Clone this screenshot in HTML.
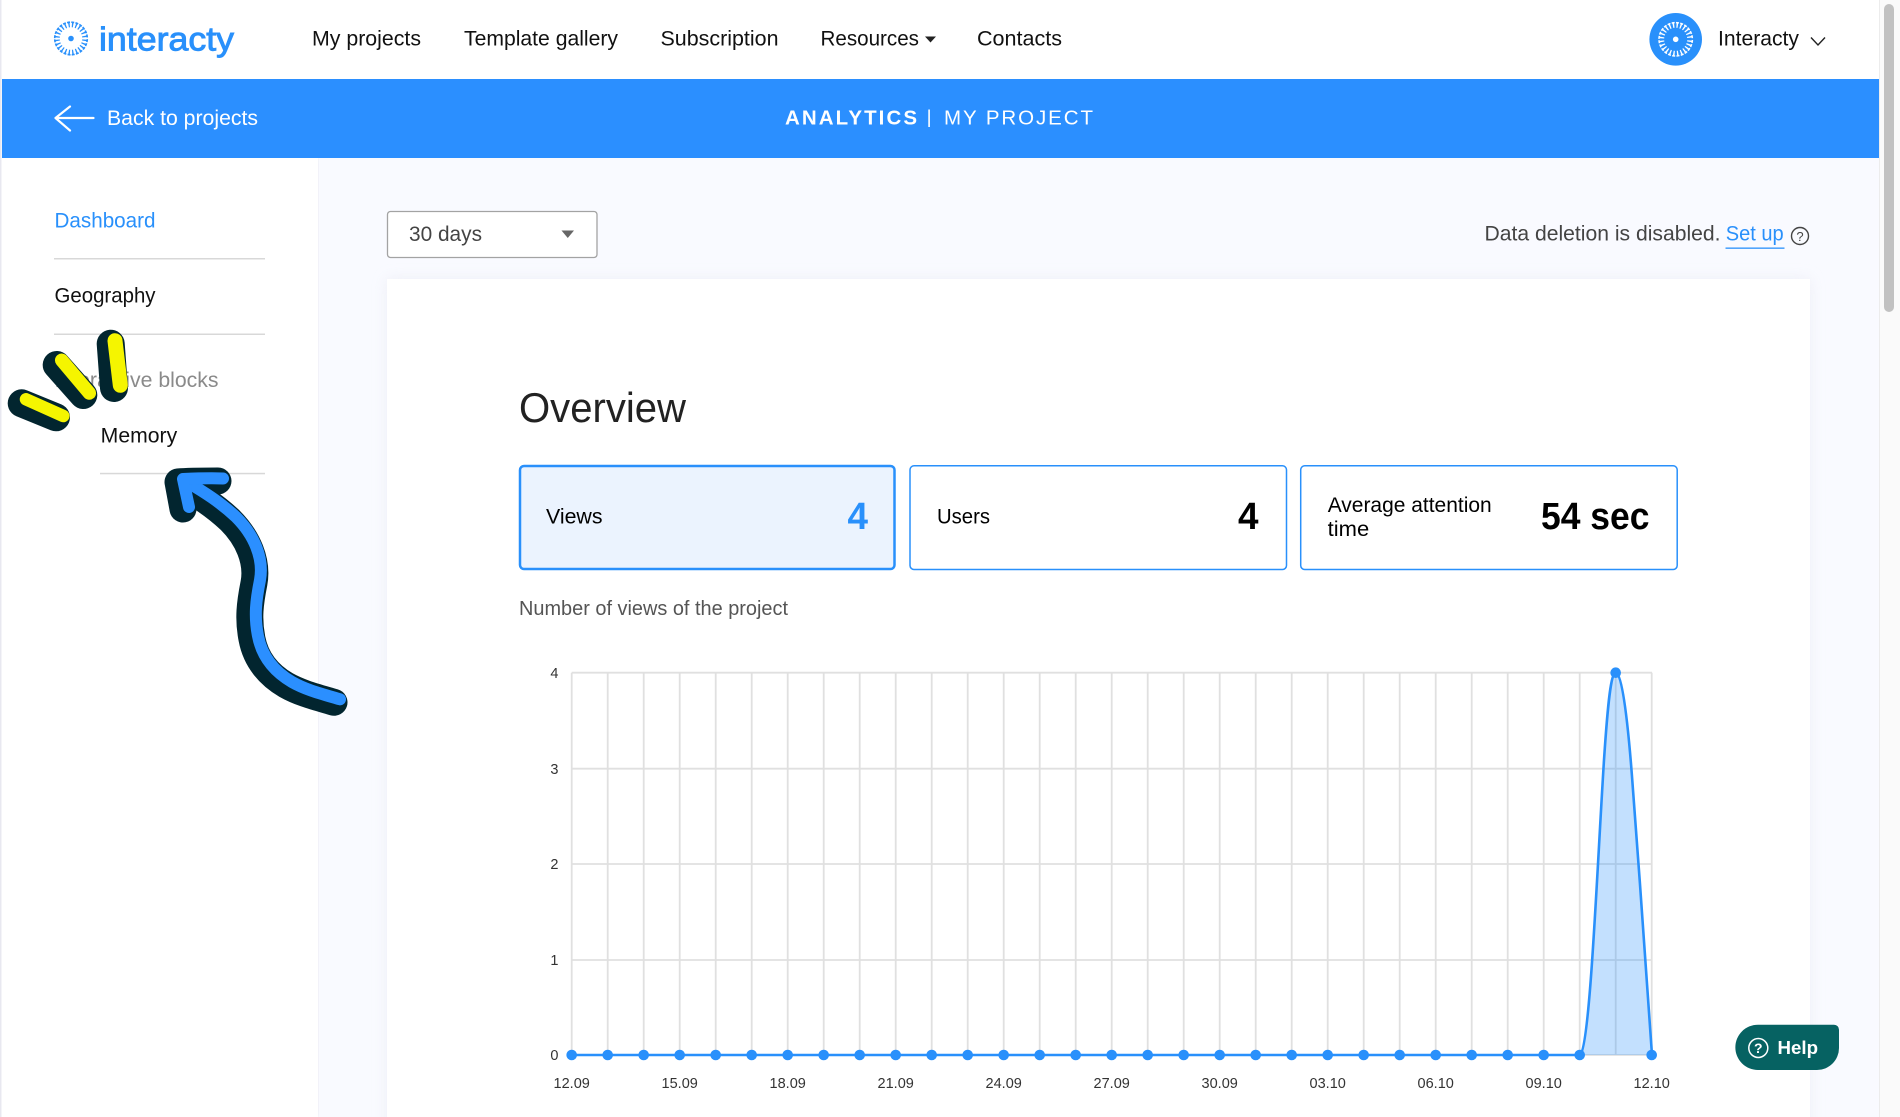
<!DOCTYPE html>
<html lang="en">
<head>
<meta charset="utf-8">
<title>Interacty Analytics</title>
<style>
html,body{margin:0;padding:0;width:1900px;height:1117px;overflow:hidden;background:#fff}
svg{display:block;position:absolute;left:0;top:0}
text{font-family:"Liberation Sans",Arial,sans-serif}
.n{font-size:21px;fill:#111}
</style>
</head>
<body>
<svg width="1900" height="1117" viewBox="0 0 1900 1117" xmlns="http://www.w3.org/2000/svg">
<defs>
<filter id="sh" x="-5%" y="-5%" width="110%" height="110%"><feGaussianBlur stdDeviation="7"/></filter>
<filter id="sh2" x="-20%" y="-5%" width="140%" height="110%"><feGaussianBlur stdDeviation="3"/></filter>
</defs>

<!-- page backgrounds -->
<rect width="1900" height="1117" fill="#fff"/>
<rect x="318" y="158" width="1561" height="959" fill="#f9faff"/>
<rect x="314" y="158" width="4" height="959" fill="#e6e7ef" filter="url(#sh2)"/>
<rect x="2" y="158" width="316" height="959" fill="#fff"/>
<rect x="0" y="0" width="1.5" height="1117" fill="#e8e8f0"/>

<!-- scrollbar -->
<rect x="1879" y="0" width="21" height="1117" fill="#fafafa"/>
<rect x="1879" y="0" width="1" height="1117" fill="#ececec"/>
<rect x="1884" y="4" width="10" height="308" rx="5" fill="#c1c1c1"/>

<!-- logo -->
<g fill="none" stroke="#2990fb">
<circle cx="71" cy="38.5" r="13.5" stroke-width="4.500" pathLength="24" stroke-dasharray=".38 .62" stroke-dashoffset="-.31"/>
<circle cx="71" cy="38.5" r="16.300" stroke-width="1.600" pathLength="24" stroke-dasharray=".7 .3" stroke-dashoffset="-.15"/>
</g>
<circle cx="71" cy="38.5" r="2.8" fill="#2990fb"/>
<text x="99" y="50.500" font-size="33" fill="#2990fb" textLength="135" lengthAdjust="spacingAndGlyphs" stroke="#2990fb" stroke-width=".9">interacty</text>

<!-- nav -->
<text class="n" x="312" y="45.5" textLength="109" lengthAdjust="spacingAndGlyphs">My projects</text>
<text class="n" x="464" y="45.5" textLength="154" lengthAdjust="spacingAndGlyphs">Template gallery</text>
<text class="n" x="660.5" y="45.5" textLength="118" lengthAdjust="spacingAndGlyphs">Subscription</text>
<text class="n" x="820.5" y="45.5" textLength="98.5" lengthAdjust="spacingAndGlyphs">Resources</text>
<path d="M925 36.5h11l-5.500 6z" fill="#222"/>
<text class="n" x="977" y="45.5" textLength="85" lengthAdjust="spacingAndGlyphs">Contacts</text>

<!-- avatar -->
<circle cx="1675.700" cy="39.300" r="26.300" fill="#2990fb"/>
<g fill="none" stroke="#fff">
<circle cx="1675.700" cy="39.300" r="13.800" stroke-width="4.500" pathLength="24" stroke-dasharray=".38 .62" stroke-dashoffset="-.31"/>
<circle cx="1675.700" cy="39.300" r="16.700" stroke-width="1.500" pathLength="24" stroke-dasharray=".7 .3" stroke-dashoffset="-.15"/>
</g>
<circle cx="1675.700" cy="39.300" r="2.800" fill="#fff"/>
<text class="n" x="1718" y="45.500" textLength="81" lengthAdjust="spacingAndGlyphs">Interacty</text>
<path d="M1811 37.500l7 7.500 7-7.500" fill="none" stroke="#222" stroke-width="1.400"/>

<!-- blue bar -->
<rect x="2" y="79" width="1877" height="79" fill="#2b8fff"/>
<path d="M93.500 118H56M70 106.500L55.500 118 70 130.500" fill="none" stroke="#fff" stroke-width="2.200" stroke-linecap="round" stroke-linejoin="round"/>
<text x="107" y="125" font-size="21" fill="#fff" textLength="151" lengthAdjust="spacingAndGlyphs">Back to projects</text>
<text x="785" y="124.300" font-size="20.500" font-weight="700" fill="#fff" textLength="132" lengthAdjust="spacing">ANALYTICS</text>
<rect x="928.300" y="109.500" width="1.600" height="17.500" fill="#fff"/>
<text x="944" y="124.300" font-size="20.500" fill="#fff" textLength="149" lengthAdjust="spacing">MY PROJECT</text>

<!-- sidebar -->
<text x="54.500" y="227.500" font-size="21" fill="#2990fb" textLength="101" lengthAdjust="spacingAndGlyphs">Dashboard</text>
<rect x="54" y="258" width="211" height="1.500" fill="#d8d8d8"/>
<text class="n" x="54.500" y="302.500" textLength="101" lengthAdjust="spacingAndGlyphs">Geography</text>
<rect x="54" y="333.500" width="211" height="1.500" fill="#d8d8d8"/>
<text x="54.500" y="387" font-size="21" fill="#8a8a8a" textLength="164" lengthAdjust="spacingAndGlyphs">Interactive blocks</text>
<text class="n" x="100.700" y="442.500" textLength="76.500" lengthAdjust="spacingAndGlyphs">Memory</text>
<rect x="100" y="472.800" width="165" height="1.500" fill="#d8d8d8"/>

<!-- top bar -->
<rect x="387.500" y="211.500" width="209.500" height="46" rx="3" fill="#fff" stroke="#a3a3a3" stroke-width="1.300"/>
<text x="409" y="241" font-size="21" fill="#444" textLength="73" lengthAdjust="spacingAndGlyphs">30 days</text>
<path d="M561.500 230.500h12.500l-6.250 7.500z" fill="#666"/>
<text x="1484.500" y="240.700" font-size="21" fill="#444" textLength="236" lengthAdjust="spacingAndGlyphs">Data deletion is disabled.</text>
<text x="1725.700" y="240.700" font-size="21" fill="#2990fb" textLength="58" lengthAdjust="spacingAndGlyphs">Set up</text>
<rect x="1725.500" y="247.500" width="59" height="1.300" fill="#2990fb"/>
<circle cx="1800" cy="236" r="8.500" fill="none" stroke="#444" stroke-width="1.400"/>
<text x="1800" y="241" font-size="13" fill="#444" text-anchor="middle">?</text>

<!-- card -->
<rect x="387" y="279" width="1423" height="860" fill="#e8e9f2" filter="url(#sh)" opacity=".7"/>
<rect x="387" y="279" width="1423" height="860" fill="#fff"/>

<text x="519" y="422" font-size="42" fill="#222" textLength="167" lengthAdjust="spacingAndGlyphs">Overview</text>

<rect x="520" y="466" width="374.500" height="103" rx="4" fill="#ebf3fe" stroke="#2990fb" stroke-width="2.500"/>
<text class="n" x="546" y="523.500" style="fill:#000" textLength="56.500" lengthAdjust="spacingAndGlyphs">Views</text>
<text x="847.500" y="529" font-size="38" font-weight="700" fill="#2990fb" textLength="20.500" lengthAdjust="spacingAndGlyphs">4</text>

<rect x="910" y="465.800" width="376.500" height="103.700" rx="4" fill="#fff" stroke="#2990fb" stroke-width="1.500"/>
<text class="n" x="937" y="523.500" style="fill:#000" textLength="53" lengthAdjust="spacingAndGlyphs">Users</text>
<text x="1238" y="529" font-size="38" font-weight="700" fill="#000" textLength="20.500" lengthAdjust="spacingAndGlyphs">4</text>

<rect x="1300.700" y="465.800" width="376.500" height="103.700" rx="4" fill="#fff" stroke="#2990fb" stroke-width="1.500"/>
<text class="n" x="1327.700" y="512" style="fill:#000" textLength="164" lengthAdjust="spacingAndGlyphs">Average attention</text>
<text class="n" x="1327.700" y="536" style="fill:#000" textLength="41.500" lengthAdjust="spacingAndGlyphs">time</text>
<text x="1541" y="529" font-size="38" font-weight="700" fill="#000" textLength="108.500" lengthAdjust="spacingAndGlyphs">54 sec</text>

<text x="519" y="615" font-size="20.500" fill="#555" textLength="269" lengthAdjust="spacingAndGlyphs">Number of views of the project</text>

<!-- chart grid -->
<g stroke="#e0e0e0" stroke-width="1.800" fill="none">
<path d="M571.700 672.700H1652M571.700 768.700H1652M571.700 864H1652M571.700 960H1652M571.700 1055H1652"/>
<path d="M571.700 672.700V1055M607.700 672.700V1055M643.700 672.700V1055M679.700 672.700V1055M715.700 672.700V1055M751.700 672.700V1055M787.700 672.700V1055M823.700 672.700V1055M859.700 672.700V1055M895.700 672.700V1055M931.700 672.700V1055M967.700 672.700V1055M1003.700 672.700V1055M1039.700 672.700V1055M1075.700 672.700V1055M1111.700 672.700V1055M1147.700 672.700V1055M1183.700 672.700V1055M1219.700 672.700V1055M1255.700 672.700V1055M1291.700 672.700V1055M1327.700 672.700V1055M1363.700 672.700V1055M1399.700 672.700V1055M1435.700 672.700V1055M1471.700 672.700V1055M1507.700 672.700V1055M1543.700 672.700V1055M1579.700 672.700V1055M1615.700 672.700V1055M1651.700 672.700V1055"/>
</g>
<path d="M1580 1055C1590 1048 1597 870 1604 760C1608 700 1611 672.700 1616 672.700C1622 672.700 1628 720 1633 790C1640 880 1648 1000 1652 1055Z" fill="#2990fb" fill-opacity=".28"/>
<path d="M571.700 1055H1580C1590 1048 1597 870 1604 760C1608 700 1611 672.700 1616 672.700C1622 672.700 1628 720 1633 790C1640 880 1648 1000 1652 1055" fill="none" stroke="#2990fb" stroke-width="2.600"/>
<g fill="#2990fb">
<circle cx="571.700" cy="1055" r="5.300"/><circle cx="607.700" cy="1055" r="5.300"/><circle cx="643.700" cy="1055" r="5.300"/><circle cx="679.700" cy="1055" r="5.300"/><circle cx="715.700" cy="1055" r="5.300"/><circle cx="751.700" cy="1055" r="5.300"/><circle cx="787.700" cy="1055" r="5.300"/><circle cx="823.700" cy="1055" r="5.300"/><circle cx="859.700" cy="1055" r="5.300"/><circle cx="895.700" cy="1055" r="5.300"/><circle cx="931.700" cy="1055" r="5.300"/><circle cx="967.700" cy="1055" r="5.300"/><circle cx="1003.700" cy="1055" r="5.300"/><circle cx="1039.700" cy="1055" r="5.300"/><circle cx="1075.700" cy="1055" r="5.300"/><circle cx="1111.700" cy="1055" r="5.300"/><circle cx="1147.700" cy="1055" r="5.300"/><circle cx="1183.700" cy="1055" r="5.300"/><circle cx="1219.700" cy="1055" r="5.300"/><circle cx="1255.700" cy="1055" r="5.300"/><circle cx="1291.700" cy="1055" r="5.300"/><circle cx="1327.700" cy="1055" r="5.300"/><circle cx="1363.700" cy="1055" r="5.300"/><circle cx="1399.700" cy="1055" r="5.300"/><circle cx="1435.700" cy="1055" r="5.300"/><circle cx="1471.700" cy="1055" r="5.300"/><circle cx="1507.700" cy="1055" r="5.300"/><circle cx="1543.700" cy="1055" r="5.300"/><circle cx="1579.700" cy="1055" r="5.300"/><circle cx="1615.700" cy="672.700" r="5.300"/><circle cx="1651.700" cy="1055" r="5.300"/>
</g>
<g font-size="14.500" fill="#333" text-anchor="end">
<text x="558.500" y="678">4</text><text x="558.500" y="774">3</text><text x="558.500" y="869">2</text><text x="558.500" y="965">1</text><text x="558.500" y="1060">0</text>
</g>
<g font-size="14.500" fill="#333" text-anchor="middle">
<text x="571.700" y="1088">12.09</text><text x="679.700" y="1088">15.09</text><text x="787.700" y="1088">18.09</text><text x="895.700" y="1088">21.09</text><text x="1003.700" y="1088">24.09</text><text x="1111.700" y="1088">27.09</text><text x="1219.700" y="1088">30.09</text><text x="1327.700" y="1088">03.10</text><text x="1435.700" y="1088">06.10</text><text x="1543.700" y="1088">09.10</text><text x="1651.700" y="1088">12.10</text>
</g>

<!-- help -->
<path d="M1758 1024.700H1834a5 5 0 0 1 5 5V1048a22 22 0 0 1-22 22H1758a22.650 22.650 0 0 1 0-45.300z" fill="#066262"/>
<circle cx="1758.300" cy="1048" r="9.500" fill="none" stroke="#fff" stroke-width="1.500"/>
<text x="1758.300" y="1053" font-size="14" font-weight="700" fill="#fff" text-anchor="middle">?</text>
<text x="1777.500" y="1054" font-size="18" font-weight="700" fill="#fff" textLength="40.500" lengthAdjust="spacingAndGlyphs">Help</text>

<!-- yellow strokes -->
<g fill="none" stroke-linecap="round">
<path d="M21.700 403.300L56 417.300M56.700 365L83.300 395M110.700 343.700L114 388" stroke="#02252f" stroke-width="28"/>
<path d="M26 399.300L63.300 416" stroke="#f5f500" stroke-width="12.500"/>
<path d="M61.700 360.300L89.300 393" stroke="#f5f500" stroke-width="13.500"/>
<path d="M115 340.700L120.300 385.300" stroke="#f5f500" stroke-width="15"/>
</g>

<!-- blue arrow -->
<g fill="none" stroke-linecap="round" stroke-linejoin="round">
<g transform="translate(-6 3)" stroke="#02252f" stroke-width="27">
<path d="M340 699.300C322 694 306 690 292 682C275 672 262 657 258 636C254 616 256 600 260 580C264 558 254 535 236 517C220 502 204 492 187 482"/>
<path d="M224 478C210 478 195 478 184 479L189 506"/>
</g>
<g stroke="#2b8fff" stroke-width="12">
<path d="M340 699.300C322 694 306 690 292 682C275 672 262 657 258 636C254 616 256 600 260 580C264 558 254 535 236 517C220 502 204 492 187 482"/>
<path d="M223 478.500C210 478 195 478.500 183 479L189 507"/>
</g>
</g>
</svg>
</body>
</html>
